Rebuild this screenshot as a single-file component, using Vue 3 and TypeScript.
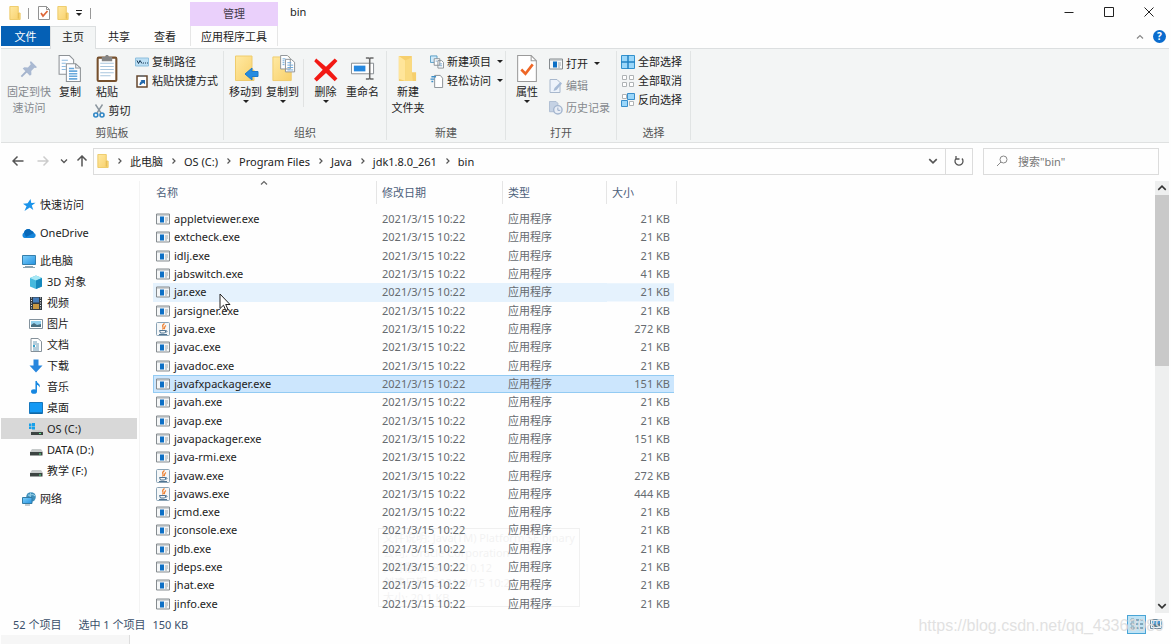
<script setup lang="ts">
import { ref } from 'vue'

interface FileItem { name: string; size: string; java?: boolean }
interface NavItem { label: string; icon: string; child?: boolean; first?: boolean; active?: boolean }

const small = '21 KB'
const files: FileItem[] = [
  { name: 'appletviewer.exe', size: small },
  { name: 'extcheck.exe', size: small },
  { name: 'idlj.exe', size: small },
  { name: 'jabswitch.exe', size: '41 KB' },
  { name: 'jar.exe', size: small },
  { name: 'jarsigner.exe', size: small },
  { name: 'java.exe', size: '272 KB', java: true },
  { name: 'javac.exe', size: small },
  { name: 'javadoc.exe', size: small },
  { name: 'javafxpackager.exe', size: '151 KB' },
  { name: 'javah.exe', size: small },
  { name: 'javap.exe', size: small },
  { name: 'javapackager.exe', size: '151 KB' },
  { name: 'java-rmi.exe', size: small },
  { name: 'javaw.exe', size: '272 KB', java: true },
  { name: 'javaws.exe', size: '444 KB', java: true },
  { name: 'jcmd.exe', size: small },
  { name: 'jconsole.exe', size: small },
  { name: 'jdb.exe', size: small },
  { name: 'jdeps.exe', size: small },
  { name: 'jhat.exe', size: small },
  { name: 'jinfo.exe', size: small },
]

const nav: NavItem[] = [
  { label: '快速访问', icon: 'star' },
  { label: 'OneDrive', icon: 'cloud', first: true },
  { label: '此电脑', icon: 'pc', first: true },
  { label: '3D 对象', icon: 'cube', child: true },
  { label: '视频', icon: 'film', child: true },
  { label: '图片', icon: 'picture', child: true },
  { label: '文档', icon: 'doc', child: true },
  { label: '下载', icon: 'down', child: true },
  { label: '音乐', icon: 'music', child: true },
  { label: '桌面', icon: 'desktop', child: true },
  { label: 'OS (C:)', icon: 'osdrive', child: true, active: true },
  { label: 'DATA (D:)', icon: 'drive', child: true },
  { label: '教学 (F:)', icon: 'drive', child: true },
  { label: '网络', icon: 'network', first: true },
]

const crumbs = ['此电脑', 'OS (C:)', 'Program Files', 'Java', 'jdk1.8.0_261', 'bin']
const selected = ref('javafxpackager.exe')
const hovered = ref('jar.exe')
const query = ref('')
</script>

<template>
  <div class="window">
    <svg class="sprite" aria-hidden="true">
      <defs>
        <linearGradient id="gold" x1="0" y1="0" x2="1" y2="1"><stop offset="0" stop-color="#ffe9a2" /><stop offset="1" stop-color="#f8d06a" /></linearGradient>
        <linearGradient id="screen" x1="0" y1="0" x2="1" y2="1"><stop offset="0" stop-color="#7fd0fb" /><stop offset="1" stop-color="#2492e0" /></linearGradient>
      </defs>
      <symbol id="folder" viewBox="0 0 12 15"><path d="M.5.5h9v7h2v7H.5z" fill="url(#gold)" stroke="#edc964" /><path d="M9.500 7.500v6" stroke="#e0b64c" /></symbol>
      <symbol id="propdoc" viewBox="0 0 12 14"><path d="M.5.5h8l3 3v10H.5z" fill="#fff" stroke="#929292" /><path d="M8.500.5v3h3" fill="none" stroke="#929292" /><path d="M3 7l2 3 4.500-5" fill="none" stroke="#dd6536" stroke-width="1.700" /></symbol>
      <symbol id="pin" viewBox="0 0 20 20"><path d="M12 1l7 7-2 1-1-.3-3.500 3.500.2 3.800-1.700 1.500L3 9.500 4.800 8l4 .2L12 4.800 11 3z" fill="#a9b9d2" /><path d="M7.500 12.500L1.500 18.500" stroke="#a3b3cc" stroke-width="2" /></symbol>
      <symbol id="copy" viewBox="0 0 22 26"><g stroke="#8d9296" fill="#fcfdff"><path d="M.5.5h10l4 4v14H.5z" /><path d="M7.500 8.500h9l4.500 4v13H7.500z" /><path d="M16.500 8.500v4H21" fill="none" /></g><path d="M3 5h6M3 8h4M3 11h4M3 14h4" stroke="#8dbbe0" /><path d="M10 13h5M10 15.500h8M10 18h8M10 20.500h8M10 23h8" stroke="#6aa9dc" stroke-width="1.500" /></symbol>
      <symbol id="paste" viewBox="0 0 20 26"><rect x="1" y="2.500" width="18" height="22.500" rx="1" fill="#fff" stroke="#76502d" stroke-width="2" /><path d="M5 2h3l1-2h2l1 2h3v4H5z" fill="#858585" /><path d="M3.500 8h13M3.500 11h13M3.500 14h13M3.500 17h13M3.500 20h10" stroke="#a9c6de" /></symbol>
      <symbol id="copypath" viewBox="0 0 14 9"><path d="M.5.5h13v8H.5z" fill="#bcdff4" stroke="#8ebfdd" /><path d="M2 3l1.500 3L5 3l2 3M8 5.500h1M10 5.500h1M12 5.500h1" fill="none" stroke="#173957" /></symbol>
      <symbol id="shortcut" viewBox="0 0 12 14"><path d="M1 2h10v11H1z" fill="#fff" stroke="#65472e" stroke-width="1.500" /><path d="M3.500 1h5v2h-5z" fill="#777" /><path d="M3.500 11c0-2 .5-3 2-4L4.500 6H9v4.500L7.500 9c-1.500.5-2 1-2.500 2z" fill="#2269ad" /></symbol>
      <symbol id="cut" viewBox="0 0 12 14"><path d="M2.500.5L8 9M9.500.5L4 9" stroke="#8b969f" stroke-width="1.400" /><g fill="none" stroke="#3187c6" stroke-width="1.600"><circle cx="2.800" cy="11" r="2" /><circle cx="9" cy="11" r="2" /></g></symbol>
      <symbol id="moveto" viewBox="0 0 24 27"><path d="M.5 1h16.500v14h2v10.500H.5z" fill="url(#gold)" stroke="#efcc6d" /><path d="M10 19l7-6v3.500h6v5h-6V25z" fill="#258be0" stroke="#1d79ca" /></symbol>
      <symbol id="copyto" viewBox="0 0 24 28"><path d="M.5 2h17v14h2v10.500H.5z" fill="url(#gold)" stroke="#efcc6d" /><path d="M8.500.5h7l3 3v11h-10zM13.500 4.500h6l3.500 3v10h-9.500z" fill="#fff" stroke="#8d9296" /><path d="M10.500 4h3M10.500 6h2M10.500 8h2M10.500 10h2M15.500 8h4M15.500 10.500h6M15.500 13h6M15.500 15.500h6" stroke="#6aa9dc" /></symbol>
      <symbol id="delete" viewBox="0 0 22 22"><path d="M2 .5l9 7.500 8-7.500 2.500 2.300L14 10.800l7.500 8-2.500 2.500-8-7.500-8.500 7.700L0 19l8-8.200L.2 3z" fill="#f21914" /></symbol>
      <symbol id="rename" viewBox="0 0 25 24"><path d="M.5 6.500h23v11H.5z" fill="#fff" stroke="#858b90" /><path d="M3 9h12v6H3z" fill="#2588df" /><path d="M15.500 1h3l1 1 1-1h3M19.500 2v20M15.500 23h3l1-1 1 1h3" fill="none" stroke="#686868" stroke-width="1.600" /></symbol>
      <symbol id="newfolder" viewBox="0 0 17 25"><path d="M0 1h12v15h4v8H0z" fill="#f6cf6d" /><path d="M0 1l6 4v19L0 22z" fill="#ffe59a" /><path d="M6 5l6-3v14l1 8H6z" fill="#fada80" /></symbol>
      <symbol id="newitem" viewBox="0 0 15 14"><path d="M.5.500h7v7h-7z" fill="#d0eafa" stroke="#559cc4" /><path d="M4.500 3.500h6v7h-6zM8.500 5.500h4l2 2v6h-6z" fill="#fff" stroke="#888f94" /><path d="M10 9h3M10 11h3M6 6h2" stroke="#79a8ce" /></symbol>
      <symbol id="easy" viewBox="0 0 14 15"><path d="M4.500 1.500h6l2.500 3v10H4.500z" fill="#fff" stroke="#858c91" /><path d="M1 3h5M0 5.500h4M1 8h2" stroke="#3c8ec7" stroke-width="1.500" /></symbol>
      <symbol id="properties" viewBox="0 0 20 26"><path d="M1 .5h13l5 5v20H1z" fill="#fff" stroke="#9a9a9a" /><path d="M14 .5v5h5" fill="none" stroke="#9a9a9a" /><path d="M4.500 14l4 4 7-9" fill="none" stroke="#ee6727" stroke-width="2.500" /></symbol>
      <symbol id="exe" viewBox="0 0 14 11"><path d="M.5.5h13v10H.5z" fill="#f5f7f8" stroke="#858b8f" /><path d="M1 1.500h12" stroke="#a9aeb1" /><path d="M4 3h4v6H4z" fill="#0d6fc5" /><path d="M9 4.500h3M9 6.500h3M9 8.500h2" stroke="#a0a8ae" /></symbol>
      <symbol id="edit" viewBox="0 0 13 14"><path d="M.5.5h7l3 3v10H.5z" fill="#edf3fb" stroke="#a8b8cd" /><path d="M4 12l1-3 6-6 1.500 1.500L7 11z" fill="#a7bbd7" /></symbol>
      <symbol id="history" viewBox="0 0 15 15"><path d="M.5.500h7l2 2v9h-9z" fill="#c5d2e4" stroke="#abbbd1" /><circle cx="9.500" cy="9.500" r="4.500" fill="#e9eef6" stroke="#a4b6cf" stroke-width="1.500" /><path d="M9.500 7v3H12" fill="none" stroke="#90a6c4" /></symbol>
      <symbol id="all" viewBox="0 0 14 14"><path d="M.5.5h13v13H.5z" fill="#9bd7fa" stroke="#3291cd" /><path d="M7 0v14M0 7h14" stroke="#2383c3" stroke-width="1.500" /></symbol>
      <symbol id="none" viewBox="0 0 14 14"><g fill="#fff" stroke="#afb3b5"><path d="M1.500 1.500h4v4h-4zM8.500 1.500h4v4h-4zM1.500 8.500h4v4h-4zM8.500 8.500h4v4h-4z" /></g></symbol>
      <symbol id="invert" viewBox="0 0 14 14"><path d="M1.500 1.500h4v4h-4zM8.500 8.500h4v4h-4z" fill="#fff" stroke="#afb3b5" /><path d="M6.500.5h7v6h-7zM.5 7.500h6v6h-6z" fill="#9bd7fa" stroke="#398fcb" /></symbol>
      <symbol id="star" viewBox="0 0 14 14"><path d="M8.500 1l.8 4 4.200-.2-3.700 2.700 1.500 4.500-3.500-2.400L2.500 13l2-4.800L1 5.800l4.600-.6z" fill="#1c94ea" /></symbol>
      <symbol id="cloud" viewBox="0 0 14 14"><path d="M2.500 12a3 3 0 01-.5-5.500 4 4 0 017-2 3.500 3.500 0 013 2.500 2.600 2.600 0 01-.5 5z" fill="#1686dc" /><path d="M2 6.500a4 4 0 017-2L12 7 4 11z" fill="#0868b8" /></symbol>
      <symbol id="pc" viewBox="0 0 14 14"><path d="M.5 1.500h13v9H.5z" fill="url(#screen)" stroke="#347fac" /><path d="M3 12.500h8M1 13.500h12" stroke="#8ca2ae" /></symbol>
      <symbol id="cube" viewBox="0 0 14 14"><path d="M1 3l6-2.500L13 3v8.500L7 14l-6-2.500z" fill="#45b9de" /><path d="M1 3l6-2.500L13 3 7 5.500z" fill="#a8e8f5" /><path d="M7 5.500L13 3v8.500L7 14z" fill="#1689bd" /></symbol>
      <symbol id="film" viewBox="0 0 14 14"><path d="M1 1h12v13H1z" fill="#333b42" /><path d="M4 1.500h6v5H4z" fill="#467ebb" /><path d="M4 8h6v5H4z" fill="#c79843" /><path d="M2.500 1.500v12M11.500 1.500v12" stroke="#e6eaee" stroke-dasharray="1 1.500" /></symbol>
      <symbol id="picture" viewBox="0 0 14 14"><path d="M.5 2.500h13v9H.5z" fill="#fff" stroke="#83929d" /><path d="M2 4h10v6H2z" fill="#91d0ed" /><path d="M2 8l3-2 3 2 4-1v3H2z" fill="#476f82" /></symbol>
      <symbol id="doc" viewBox="0 0 14 14"><path d="M2 .5h7l3.500 3v10H2z" fill="#fff" stroke="#849099" /><path d="M4 4h4M4 6h6M7 8h3M4 10h6M4 12h6" stroke="#6a9bb8" /><path d="M4 7h2v2H4z" fill="#37a0c8" /></symbol>
      <symbol id="down" viewBox="0 0 14 14"><path d="M4.500.5h5v6h4L7 13.500.5 6.500h4z" fill="#2887de" /></symbol>
      <symbol id="music" viewBox="0 0 14 14"><path d="M7 .5c1 3 5 3 3.500 7-.5-2-2-2.500-2.500-2.500v6.500" fill="#1687e1" /><path d="M7.200 1v10" stroke="#1687e1" stroke-width="1.500" /><ellipse cx="5" cy="11.500" rx="3" ry="2.300" fill="#1687e1" /></symbol>
      <symbol id="desktop" viewBox="0 0 14 14"><path d="M.5 1.500h13v11H.5z" fill="#1499f4" stroke="#1677bd" /><path d="M1 12h12" stroke="#0d598f" /></symbol>
      <symbol id="drive" viewBox="0 0 14 14"><path d="M3 6h9l2 3H1z" fill="#c6caca" /><path d="M1 9h12.500v3.500H1z" fill="#3c4442" /><path d="M10 11h2" stroke="#5be88d" /></symbol>
      <symbol id="osdrive" viewBox="0 0 14 14"><path d="M0 1.500h2.500V4H0zM3 1h3v3H3zM0 4.500h2.500V7H0zM3 4.500h3v3H3z" fill="#18a0ea" /><path d="M4 8h8l2 2H2z" fill="#c6caca" /><path d="M2 10h12v3H2z" fill="#3c4442" /><path d="M10 11.500h2" stroke="#5be88d" /></symbol>
      <symbol id="network" viewBox="0 0 14 14"><circle cx="9" cy="5" r="4.800" fill="#3f8fba" /><path d="M6 3c3 1 4-2 7 1M9 .5c-2 3 0 6 0 9" fill="none" stroke="#a5dcf2" /><path d="M.5 5.500h9.500v6H.5z" fill="url(#screen)" stroke="#327ba5" /><path d="M3 13h5" stroke="#8b9ca5" /></symbol>
      <symbol id="java" viewBox="0 0 14 14"><rect x=".5" y=".5" width="13" height="13" rx="1" fill="#f5f7f8" stroke="#8aa3b5" /><path d="M8.500 1.500C4 4.500 9 5 6.500 7.500M10 3.500C7.500 5 9.500 5.500 8 7" fill="none" stroke="#ee7e2c" stroke-width="1.200" /><path d="M3.500 8.500h6v1.500l-1 1h-4zM9.500 8.500c2 0 2 1.500 0 2M3 12.500h8" fill="none" stroke="#4f7492" /></symbol>
      <symbol id="chev" viewBox="0 0 8 8"><path d="M1 2.500l3 3 3-3" fill="none" stroke="currentColor" stroke-width="1.300" /></symbol>
      <symbol id="chevup" viewBox="0 0 8 8"><path d="M1 5.500l3-3 3 3" fill="none" stroke="currentColor" stroke-width="1.200" /></symbol>
      <symbol id="chevright" viewBox="0 0 8 8"><path d="M2.500 1.500L5 4 2.500 6.500" fill="none" stroke="currentColor" stroke-width="1.200" /></symbol>
      <symbol id="backarrow" viewBox="0 0 12 12"><path d="M11.500 6H1M5.500 1.500L1 6l4.500 4.500" fill="none" stroke="currentColor" stroke-width="1.500" /></symbol>
    </svg>

    <header class="top">
      <div class="quick">
        <svg class="i12"><use href="#folder" /></svg>
        <span class="bar"></span>
        <svg class="i12 q-doc"><use href="#propdoc" /></svg>
        <svg class="i12 q-folder"><use href="#folder" /></svg>
        <button class="plain" aria-label="自定义快速访问工具栏"><svg class="i8" viewBox="0 0 8 8"><path d="M1 1.500h6" stroke="#222" /><path d="M1 4h6L4 7z" fill="#222" /></svg></button>
        <span class="bar"></span>
      </div>
      <div class="manage">管理</div>
      <div class="title">bin</div>
      <nav class="tabs">
        <button class="file-tab">文件</button>
        <button class="home-tab">主页</button>
        <button class="tab">共享</button>
        <button class="tab">查看</button>
      </nav>
      <button class="tool-tab">应用程序工具</button>
      <div class="win-buttons">
        <button aria-label="最小化"><svg class="i12" viewBox="0 0 12 12"><path d="M1.500 6.500h9" stroke="#222" /></svg></button>
        <button aria-label="最大化"><svg class="i12" viewBox="0 0 12 12"><path d="M1.500 1.500h9v9h-9z" fill="none" stroke="#222" /></svg></button>
        <button aria-label="关闭"><svg class="i12" viewBox="0 0 12 12"><path d="M1.500 1.500l9 9M10.500 1.500l-9 9" stroke="#222" /></svg></button>
      </div>
      <div class="help">
        <button aria-label="折叠功能区"><svg class="i8"><use href="#chevup" /></svg></button>
        <button class="question" aria-label="帮助">?</button>
      </div>
    </header>

    <section class="ribbon">
      <div class="group clip">
        <div class="tools">
          <button class="big w-pin dim"><svg><use href="#pin" /></svg><span>固定到快<br />速访问</span></button>
          <button class="big w-copy"><svg><use href="#copy" /></svg><span>复制</span></button>
          <div class="paste-col">
            <button class="big"><svg><use href="#paste" /></svg><span>粘贴</span></button>
            <button class="row"><svg><use href="#cut" /></svg>剪切</button>
          </div>
          <div class="stack">
            <button class="row"><svg><use href="#copypath" /></svg>复制路径</button>
            <button class="row"><svg><use href="#shortcut" /></svg>粘贴快捷方式</button>
          </div>
        </div>
        <div class="caption">剪贴板</div>
      </div>
      <div class="group organize">
        <div class="tools">
          <button class="big w37 shifted"><svg><use href="#moveto" /></svg><span>移动到</span><i></i></button>
          <button class="big w37 shifted"><svg><use href="#copyto" /></svg><span>复制到</span><i></i></button>
          <span class="divider"></span>
          <button class="big w37"><svg class="cross"><use href="#delete" /></svg><span>删除</span><i></i></button>
          <button class="big w37"><svg><use href="#rename" /></svg><span>重命名</span></button>
        </div>
        <div class="caption">组织</div>
      </div>
      <div class="group create">
        <div class="tools">
          <button class="big w42"><svg><use href="#newfolder" /></svg><span>新建<br />文件夹</span></button>
          <div class="stack">
            <button class="row"><svg><use href="#newitem" /></svg>新建项目<i></i></button>
            <button class="row"><svg><use href="#easy" /></svg>轻松访问<i></i></button>
          </div>
        </div>
        <div class="caption">新建</div>
      </div>
      <div class="group open">
        <div class="tools">
          <button class="big w42"><svg><use href="#properties" /></svg><span>属性</span><i></i></button>
          <div class="stack three">
            <button class="row"><svg><use href="#exe" /></svg>打开<i></i></button>
            <button class="row dim"><svg><use href="#edit" /></svg>编辑</button>
            <button class="row dim"><svg><use href="#history" /></svg>历史记录</button>
          </div>
        </div>
        <div class="caption">打开</div>
      </div>
      <div class="group select">
        <div class="tools">
          <div class="stack">
            <button class="row"><svg><use href="#all" /></svg>全部选择</button>
            <button class="row"><svg><use href="#none" /></svg>全部取消</button>
            <button class="row"><svg><use href="#invert" /></svg>反向选择</button>
          </div>
        </div>
        <div class="caption">选择</div>
      </div>
    </section>

    <section class="address">
      <div class="history-nav">
        <button aria-label="返回"><svg class="i12"><use href="#backarrow" /></svg></button>
        <button aria-label="前进" class="off"><svg class="i12 flip"><use href="#backarrow" /></svg></button>
        <button aria-label="最近位置" class="recent"><svg class="i8"><use href="#chev" /></svg></button>
        <button aria-label="上移" class="parent"><svg class="i12 up"><use href="#backarrow" /></svg></button>
      </div>
      <div class="path">
        <svg class="i12 path-icon"><use href="#folder" /></svg>
        <template v-for="c in crumbs" :key="c">
          <svg class="i8 sep"><use href="#chevright" /></svg>
          <a href="#">{{ c }}</a>
        </template>
        <button class="drop" aria-label="以前的位置"><svg class="i10"><use href="#chev" /></svg></button>
        <button class="refresh" aria-label="刷新"><svg class="i12" viewBox="0 0 12 12"><path d="M3.500 3A4 4 0 109 3.500M3 1v3h3.500" fill="none" stroke="#555" stroke-width="1.300" /></svg></button>
      </div>
      <label class="search">
        <svg class="i12" viewBox="0 0 12 12"><circle cx="7.500" cy="4.500" r="3.500" fill="none" stroke="#888" /><path d="M5 7L1 11" stroke="#888" /></svg>
        <input v-model="query" type="text" placeholder="搜索&quot;bin&quot;" aria-label="搜索" />
      </label>
    </section>

    <main class="body">
      <nav class="sidebar">
        <a v-for="n in nav" :key="n.label" href="#" :class="{ child: n.child, first: n.first, active: n.active }">
          <svg><use :href="'#' + n.icon" /></svg>{{ n.label }}
        </a>
      </nav>
      <div class="list">
        <table>
          <colgroup><col class="c-name" /><col class="c-date" /><col class="c-type" /><col class="c-size" /></colgroup>
          <thead>
            <tr><th>名称<svg class="i8 sort"><use href="#chevup" /></svg></th><th>修改日期</th><th>类型</th><th>大小</th></tr>
          </thead>
          <tbody>
            <tr v-for="f in files" :key="f.name" :class="{ selected: f.name === selected, hover: f.name === hovered }" @click="selected = f.name" @mouseenter="hovered = f.name">
              <td><div class="name"><svg v-if="f.java"><use href="#java" /></svg><svg v-else><use href="#exe" /></svg>{{ f.name }}</div></td>
              <td>2021/3/15 10:22</td>
              <td>应用程序</td>
              <td class="size">{{ f.size }}</td>
            </tr>
          </tbody>
        </table>
        <div class="tip">
          文件说明: Java(TM) Platform SE binary<br />公司: Oracle Corporation<br />文件版本: 8.0.2610.12<br />创建日期: 2021/3/15 10:22<br />大小: 20.1 KB
        </div>
        <svg class="cursor" viewBox="0 0 12 19"><path d="M1 1v14.500l3.500-3.300 2.300 5.300 2.200-1-2.300-5H11z" fill="#fff" stroke="#222" /></svg>
      </div>
      <div class="scroll">
        <button aria-label="向上滚动"><svg class="i10"><use href="#chevup" /></svg></button>
        <span class="thumb"></span>
        <button aria-label="向下滚动"><svg class="i10"><use href="#chev" /></svg></button>
      </div>
    </main>

    <footer class="status">
      <span class="count">52 个项目</span><span class="picked">选中 1 个项目</span><span class="bytes">150 KB</span>
      <div class="views">
        <button class="on" aria-label="详细信息"><svg viewBox="0 0 14 14"><path d="M1 2h3v2H1zM1 6h3v2H1zM1 10h3v2H1z" fill="#fff" stroke="#859aa7" /><path d="M6 3h3M10 3h3M6 7h3M10 7h3M6 11h3M10 11h3" stroke="#456c83" /></svg></button>
        <button aria-label="大图标"><svg viewBox="0 0 14 14"><path d="M1.500 2.500h11v9h-11z" fill="#e9f4fb" stroke="#6d8799" /><path d="M3 4h8v4H3z" fill="#4799d2" /><path d="M3 9l3-2 2 1 3-2v4H3z" fill="#577b8b" /></svg></button>
      </div>
      <div class="mark">https://blog.csdn.net/qq_43363089</div>
    </footer>
    <div class="under"><span></span></div>
  </div>
</template>

<style>
html, body { margin: 0; background: #fefefe; }
</style>

<style scoped>
.window { box-sizing: border-box; min-height: 100vh; display: flex; flex-direction: column; padding-left: 1px; padding-right: 2px; background: #fefefe; color: #222; font: 11px/15px "Noto Sans", "Noto Sans CJK SC", sans-serif; overflow: hidden; }
.window * { box-sizing: border-box; }
.sprite { position: absolute; width: 0; height: 0; }
button { margin: 0; padding: 0; border: 0; background: none; font: inherit; color: inherit; display: flex; align-items: center; justify-content: center; white-space: nowrap; }
a { color: inherit; text-decoration: none; white-space: nowrap; }
svg { flex: none; display: block; }
.i12 { width: 12px; height: 14px; }
.i10 { width: 10px; height: 10px; }
.i8 { width: 8px; height: 8px; }

.top { display: grid; grid-template-columns: 189px 88px 1fr auto; grid-template-rows: 26px 23px; border-bottom: 1px solid #dcdfe0; height: 49px; }
.quick { display: flex; align-items: center; padding-left: 8px; }
.bar { width: 1px; height: 11px; background: #999; margin: 0 9px 0 7px; }
.q-doc { margin-right: 7px; }
.q-folder { margin-right: 6px; }
.manage { background: #ead0fb; margin-top: 2px; padding-bottom: 2px; display: flex; align-items: center; justify-content: center; color: #433b4a; }
.title { padding: 4px 0 0 12px; }
.tabs { grid-row: 2; grid-column: 1; display: flex; }
.file-tab { width: 49px; height: 20px; background: #0560b5; color: #fff; }
.home-tab { width: 46px; height: 23px; background: #f3f5f5; border: 1px solid #dcdfe0; border-bottom: 0; }
.home-tab, .tab { padding-bottom: 3px; }
.tab { width: 46px; height: 23px; }
.tool-tab { grid-row: 2; grid-column: 2; border: 1px solid #e6e6e6; border-width: 0 1px; height: 20px; }
.win-buttons { grid-row: 1; grid-column: 4; display: flex; }
.win-buttons button { width: 40px; height: 24px; }
.help { grid-row: 2; grid-column: 4; display: flex; justify-content: flex-end; align-items: center; gap: 9px; padding: 0 3px 2px 0; color: #888; }
.question { width: 13px; height: 13px; border-radius: 50%; background: #0a6cce; color: #fff; font-size: 10px; font-weight: 700; }

.ribbon { display: flex; background: #f3f5f5; border-bottom: 1px solid #dfe1e1; height: 94px; }
.group { border-right: 1px solid #e1e4e4; display: flex; flex-direction: column; justify-content: space-between; margin: 2px 0; }
.tools { display: flex; align-items: flex-start; padding-top: 3px; }
.caption { text-align: center; color: #555; }
.clip { width: 223px; }
.organize { width: 163px; }
.create { width: 119px; }
.open { width: 111px; }
.select { width: 74px; }
.big { flex-direction: column; justify-content: flex-start; flex: none; }
.big > svg { width: 26px; height: 30px; padding: 1px 1px 2px; }
.big span { line-height: 16px; }
i { border: 3px solid transparent; border-top-color: #222; border-bottom: 0; }
.dim { color: #85898e; }
.w-pin { width: 56px; }
.w-pin > svg { padding: 4px; }
.w-copy { width: 26px; }
.w37 { width: 37px; }
.w42 { width: 42px; }
.shifted > svg { margin-left: 3px; }
.big > .cross { padding-top: 4px; }
.paste-col { width: 48px; display: flex; flex-direction: column; align-items: center; }
.paste-col .row { margin-top: 3px; padding-left: 8px; }
.divider { width: 1px; height: 48px; margin: 5px 3px 0 2px; background: #e0e2e2; }
.organize .tools { padding-left: 3px; }
.stack { display: flex; flex-direction: column; align-items: flex-start; gap: 4px; padding-left: 4px; }
.row { gap: 3px; height: 15px; }
.row svg { width: 14px; height: 14px; }
.row i { margin-left: 3px; }
.create .stack { padding-left: 1px; }
.open .stack { gap: 7px; padding: 2px 0 0 1px; }

.address { display: flex; align-items: center; height: 38px; padding: 0 10px 2px 0; }
.history-nav { width: 92px; display: flex; align-items: center; padding-left: 11px; color: #555; }
.off { color: #ccc; margin-left: 13px; }
.recent { margin-left: 11px; }
.parent { margin-left: 8px; }
.flip { transform: rotate(180deg); }
.up { transform: rotate(90deg); }
.path { flex: 1; height: 27px; border: 1px solid #dcdcdc; display: flex; align-items: center; padding-left: 3px; }
.sep { margin: 0 6px 0 7px; color: #555; }
.drop { margin-left: auto; width: 24px; color: #555; }
.refresh { width: 27px; height: 25px; border-left: 1px solid #dcdcdc; }
.search { width: 176px; height: 27px; margin-left: 10px; border: 1px solid #dcdcdc; display: flex; align-items: center; padding-left: 12px; gap: 10px; }
.search input { flex: 1; min-width: 0; border: 0; outline: 0; padding: 0; background: none; font: inherit; color: #555; }
.search input::placeholder { color: #777; opacity: 1; }

.body { flex: 1; display: flex; }
.sidebar { width: 139px; padding: 13px 2px 0 0; border-right: 1px solid #f3f3f3; }
.sidebar a { display: flex; align-items: center; height: 21px; padding-left: 21px; gap: 4px; }
.sidebar a svg { width: 14px; height: 14px; }
.sidebar .first { margin-top: 7px; }
.sidebar .child { padding-left: 28px; }
.sidebar .active { background: #d8d8d8; }
.list { flex: 1; position: relative; padding-left: 13px; display: flex; align-items: stretch; }
table { border-collapse: separate; border-spacing: 0; table-layout: fixed; width: 524px; height: 100%; }
.c-name { width: 224px; }
.c-date { width: 126px; }
.c-type { width: 104px; }
.c-size { width: 70px; }
th { height: 29px; padding: 0 0 7px 5px; text-align: left; font-weight: 400; color: #4c607a; background: linear-gradient(#e5e5e5, #e5e5e5) right 0 top 0 / 1px 23px no-repeat; position: relative; }
th:first-child { padding-left: 3px; }
.sort { position: absolute; left: 107px; top: -2px; color: #666; }
td { padding: 0 0 0 5px; color: #666b70; line-height: 14px; white-space: nowrap; }
td:first-child { padding-left: 3px; color: #222; }
.name { display: flex; align-items: center; gap: 4px; }
.name svg { width: 14px; height: 14px; }
td.size { text-align: right; padding: 0 7px 0 0; }
.hover td { background: #e5f2fd; }
.selected td { background: #cce6fd; box-shadow: inset 0 1px #93cbf3, inset 0 -1px #93cbf3; }
.selected td:first-child { box-shadow: inset 0 1px #93cbf3, inset 0 -1px #93cbf3, inset 1px 0 #93cbf3; }
.hover .size, .selected .size { clip-path: inset(0 3px 0 0); }
.tip { position: absolute; left: 238px; top: 347px; width: 202px; padding: 1px 4px; border: 1px solid #000; opacity: .05; line-height: 15px; white-space: nowrap; pointer-events: none; }
.cursor { position: absolute; left: 79px; top: 112px; width: 12px; height: 19px; pointer-events: none; }
.scroll { width: 14px; background: #eeefef; display: flex; flex-direction: column; color: #333; }
.scroll button { height: 14px; }
.scroll button:last-child { margin-top: auto; }
.thumb { height: 171px; background: #c9c9c9; }

.status { height: 22px; display: flex; align-items: center; padding: 0 4px 0 12px; color: #3a506b; position: relative; }
.picked { margin-left: 17px; }
.bytes { margin-left: 7px; }
.views { margin-left: auto; display: flex; align-items: center; }
.views button { width: 19px; height: 19px; border: 1px solid transparent; }
.views .on { background: #bfe3f5; border-color: #49a5d6; }
.views svg { width: 14px; height: 14px; }
.mark { position: absolute; right: 5px; top: 3px; font: 16px/20px "Liberation Sans", Arial, sans-serif; color: #dedede; opacity: .9; pointer-events: none; }
.under { height: 9px; }
.under span { display: block; width: 129px; height: 9px; background: #f6f6f6; border-right: 1px solid #ddd; }
</style>
